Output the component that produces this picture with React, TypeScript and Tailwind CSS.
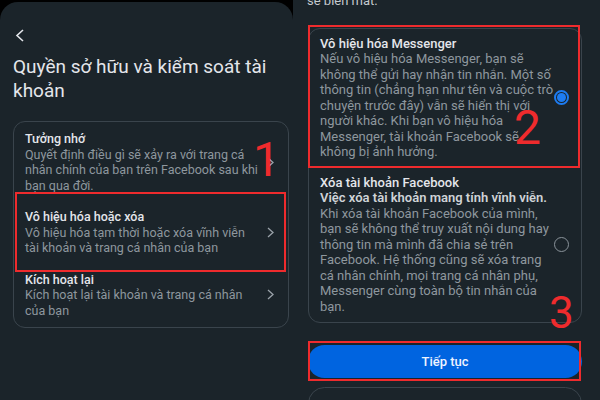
import React from "react";

const font = { fontFamily: "Roboto, 'Noto Sans', sans-serif" };

type Item = { title: string; lines: string[]; boxed?: boolean };

const items: Item[] = [
  {
    title: "Tưởng nhớ",
    lines: [
      "Quyết định điều gì sẽ xảy ra với trang cá",
      "nhân chính của bạn trên Facebook sau khi",
      "bạn qua đời.",
    ],
  },
  {
    title: "Vô hiệu hóa hoặc xóa",
    lines: ["Vô hiệu hóa tạm thời hoặc xóa vĩnh viễn", "tài khoản và trang cá nhân của bạn"],
    boxed: true,
  },
  {
    title: "Kích hoạt lại",
    lines: ["Kích hoạt lại tài khoản và trang cá nhân", "của bạn"],
  },
];

function Chevron() {
  return (
    <svg width="7" height="11" viewBox="0 0 7 11" fill="none" stroke="#9aa2a9" strokeWidth="1.3">
      <polyline points="1,1 6,5.5 1,10" />
    </svg>
  );
}

function Radio({ checked }: { checked?: boolean }) {
  if (checked) {
    return (
      <div className="w-[15px] h-[15px] rounded-full border-[2px] border-[#1d7cf2] flex items-center justify-center">
        <div className="w-[9px] h-[9px] rounded-full bg-[#1d7cf2]" />
      </div>
    );
  }
  return <div className="w-[15px] h-[15px] rounded-full border-[1.5px] border-[#8a939a]" />;
}

function LeftPanel() {
  return (
    <div className="relative w-[293px] mt-[2px] rounded-t-[18px] bg-[#1b242a] pl-[13px] pr-[4px]">
      <div className="pt-[27px] pl-[2px]">
        <svg width="10" height="13" viewBox="0 0 10 13" fill="none" stroke="#e4e6eb" strokeWidth="1.6">
          <polyline points="8,1 2,6.5 8,12" />
        </svg>
      </div>
      <h1 className="mt-[13px] text-[19px] leading-[24px] text-[#e4e6eb]">
        Quyền sở hữu và kiểm soát tài
        <br />
        khoản
      </h1>
      <div className="mt-[18px] rounded-[12px] border border-[#3a444c] py-[1px]">
        {items.map((it) => (
          <div key={it.title} className="relative flex items-center pl-[11px] pr-[14px] py-[8px]">
            <div className="flex-1 min-w-0 text-[12.5px] leading-[15.5px]">
              <div className="text-[#e4e6eb] font-medium">{it.title}</div>
              {it.lines.map((l) => (
                <div key={l} className="text-[#8e979e] whitespace-nowrap">
                  {l}
                </div>
              ))}
            </div>
            <Chevron />
            {it.boxed && (
              <div className="absolute left-[1px] right-[2px] top-[-9px] bottom-[-8px] border-[2px] border-[#ef2b2d]" />
            )}
          </div>
        ))}
      </div>
      <div className="absolute left-[253px] top-[134px] text-[48px] leading-none text-[#ef2b2d]">1</div>
    </div>
  );
}

const msgLines = [
  "Nếu vô hiệu hóa Messenger, bạn sẽ",
  "không thể gửi hay nhận tin nhắn. Một số",
  "thông tin (chẳng hạn như tên và cuộc trò",
  "chuyện trước đây) vẫn sẽ hiển thị với",
  "người khác. Khi bạn vô hiệu hóa",
  "Messenger, tài khoản Facebook sẽ",
  "không bị ảnh hưởng.",
];

const delLines = [
  "Khi xóa tài khoản Facebook của mình,",
  "bạn sẽ không thể truy xuất nội dung hay",
  "thông tin mà mình đã chia sẻ trên",
  "Facebook. Hệ thống cũng sẽ xóa trang",
  "cá nhân chính, mọi trang cá nhân phụ,",
  "Messenger cùng toàn bộ tin nhắn của",
  "bạn.",
];

function RightPanel() {
  return (
    <div className="relative flex-1 bg-[#1b242a] pl-[14px] pr-[18px] overflow-hidden">
      <div className="-mt-[7px] text-[13px] leading-[15.5px] text-[#c4c9ce]">sẽ biến mất.</div>
      <div className="relative mt-[19px] ml-[1px] rounded-[12px] border border-[#3a444c] text-[13px] leading-[15.5px]">
        <div className="relative flex items-center pl-[11px] pr-[12px] py-[7px]">
          <div className="flex-1 min-w-0">
            <div className="text-[#e4e6eb] font-medium">Vô hiệu hóa Messenger</div>
            {msgLines.map((l) => (
              <div key={l} className="text-[#8e979e] whitespace-nowrap">
                {l}
              </div>
            ))}
          </div>
          <Radio checked />
          <div className="absolute left-[-1px] right-[1px] top-[-4px] bottom-[-1px] border-[2px] border-[#ef2b2d]" />
        </div>
        <div className="flex items-center pl-[11px] pr-[12px] py-[8px]">
          <div className="flex-1 min-w-0">
            <div className="text-[#e4e6eb] font-medium">Xóa tài khoản Facebook</div>
            <div className="text-[#cfd3d7] font-semibold whitespace-nowrap">
              Việc xóa tài khoản mang tính vĩnh viễn.
            </div>
            {delLines.map((l) => (
              <div key={l} className="text-[#8e979e] whitespace-nowrap">
                {l}
              </div>
            ))}
          </div>
          <Radio />
        </div>
      </div>
      <div className="relative mt-[22px] ml-[1px]">
        <button className="w-full h-[33px] rounded-full bg-[#0064e0] text-[13px] font-medium text-[#eef3ff]">
          Tiếp tục
        </button>
        <div className="absolute left-0 right-[1px] top-[-4px] bottom-[-3px] border-[2px] border-[#ef2b2d]" />
      </div>
      <div className="mt-[9px] ml-[1px] h-[33px] rounded-full border border-[#3a444c]" />
      <div className="absolute left-[221px] top-[104px] text-[48px] leading-none text-[#ef2b2d]">2</div>
      <div className="absolute left-[256px] top-[291px] text-[44px] leading-none text-[#ef2b2d]">3</div>
    </div>
  );
}

export default function App() {
  return (
    <div className="w-[600px] h-[400px] flex bg-black overflow-hidden" style={font}>
      <LeftPanel />
      <RightPanel />
    </div>
  );
}
